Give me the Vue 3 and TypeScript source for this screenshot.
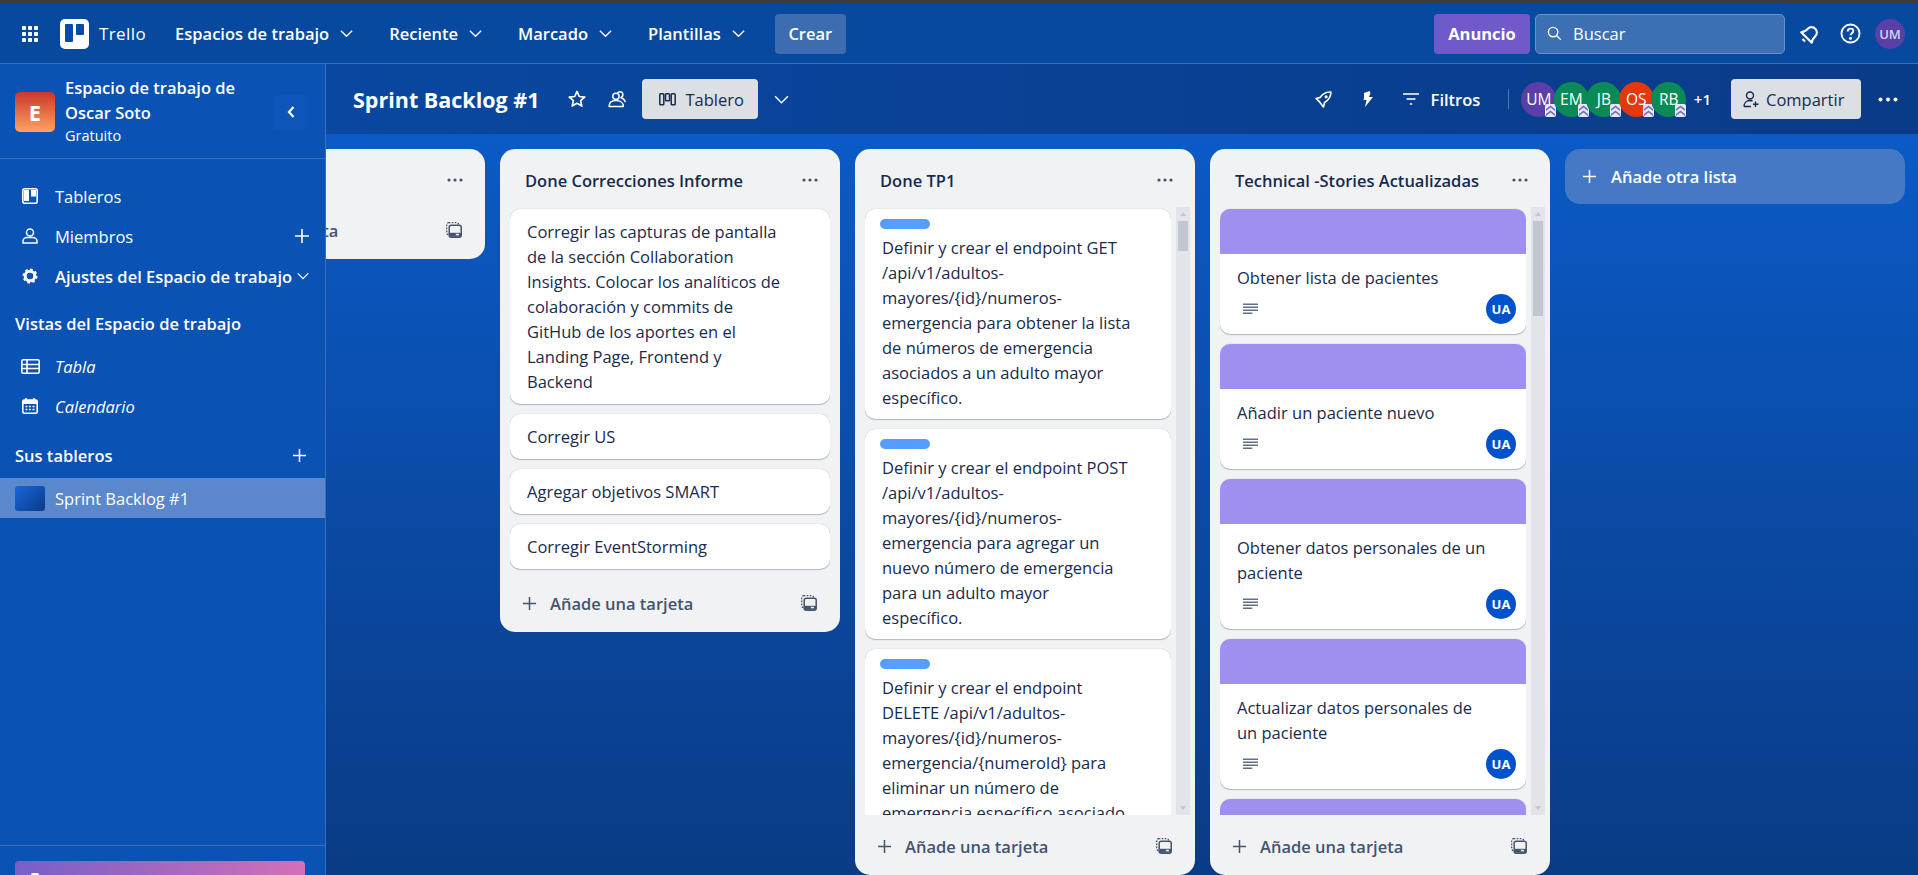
<script setup lang="ts">
type Card = {
  text: string;
  label?: boolean;
  cover?: boolean;
};

type BoardList = {
  id: string;
  title: string;
  clipped?: boolean;
  scroll?: boolean;
  thumb?: number;
  cards: Card[];
};

const navMenus = ["Espacios de trabajo", "Reciente", "Marcado", "Plantillas"];

const members = [
  { name: "UM", color: "#5a3fa8" },
  { name: "EM", color: "#0a8a56" },
  { name: "JB", color: "#0a8a56" },
  { name: "OS", color: "#e2380d" },
  { name: "RB", color: "#0a8a56" },
];

const lists: BoardList[] = [
  { id: "first", title: "", clipped: true, cards: [] },
  {
    id: "informe",
    title: "Done Correcciones Informe",
    cards: [
      {
        text: "Corregir las capturas de pantalla\nde la sección Collaboration\nInsights. Colocar los analíticos de\ncolaboración y commits de\nGitHub de los aportes en el\nLanding Page, Frontend y\nBackend",
      },
      { text: "Corregir US" },
      { text: "Agregar objetivos SMART" },
      { text: "Corregir EventStorming" },
    ],
  },
  {
    id: "tp1",
    title: "Done TP1",
    scroll: true,
    thumb: 30,
    cards: [
      {
        label: true,
        text: "Definir y crear el endpoint GET\n/api/v1/adultos-\nmayores/{id}/numeros-\nemergencia para obtener la lista\nde números de emergencia\nasociados a un adulto mayor\nespecífico.",
      },
      {
        label: true,
        text: "Definir y crear el endpoint POST\n/api/v1/adultos-\nmayores/{id}/numeros-\nemergencia para agregar un\nnuevo número de emergencia\npara un adulto mayor\nespecífico.",
      },
      {
        label: true,
        text: "Definir y crear el endpoint\nDELETE /api/v1/adultos-\nmayores/{id}/numeros-\nemergencia/{numeroId} para\neliminar un número de\nemergencia específico asociado\na un adulto mayor.",
      },
    ],
  },
  {
    id: "technical",
    title: "Technical -Stories Actualizadas",
    scroll: true,
    thumb: 95,
    cards: [
      { cover: true, text: "Obtener lista de pacientes" },
      { cover: true, text: "Añadir un paciente nuevo" },
      { cover: true, text: "Obtener datos personales de un\npaciente" },
      { cover: true, text: "Actualizar datos personales de\nun paciente" },
      { cover: true, text: "Eliminar un paciente" },
    ],
  },
];
</script>

<template>
  <svg class="sprite" aria-hidden="true">
    <symbol id="i-chevron" viewBox="0 0 16 16"><path d="M2 5l6 6 6-6" fill="none" stroke="currentColor" stroke-width="1.4" /></symbol>
    <symbol id="i-plus" viewBox="0 0 16 16"><path d="M8 1v14M1 8h14" fill="none" stroke="currentColor" stroke-width="1.6" /></symbol>
    <symbol id="i-dots" viewBox="0 0 16 4"><circle cx="2" cy="2" r="1.6" fill="currentColor" /><circle cx="8" cy="2" r="1.6" fill="currentColor" /><circle cx="14" cy="2" r="1.6" fill="currentColor" /></symbol>
    <symbol id="i-template" viewBox="0 0 16 16">
      <rect x=".7" y=".7" width="12" height="12" rx="2" fill="none" stroke="currentColor" stroke-width="1.3" stroke-dasharray="1.6 1.4" />
      <rect x="3.2" y="3.2" width="12" height="12" rx="2" fill="#f1f2f4" stroke="currentColor" stroke-width="1.5" />
      <rect x="3.500" y="10.800" width="11.500" height="4" fill="currentColor" />
      <rect x="9.800" y="11.800" width="3.200" height="1.500" fill="#f1f2f4" />
    </symbol>
    <symbol id="i-desc" viewBox="0 0 16 12"><path d="M0 1h16M0 4.200h16M0 7.400h16M0 10.600h10" fill="none" stroke="currentColor" stroke-width="1.500" /></symbol>
    <symbol id="i-chev-up" viewBox="0 0 11 13"><path d="M1 5l4.500-3.500L10 5v2L5.500 3.500 1 7zM1 10l4.500-3.500L10 10v2L5.500 8.500 1 12z" fill="#6a6fc9" /></symbol>
  </svg>

  <div class="app">
    <div class="top-strip"></div>

    <header class="nav">
      <svg class="grid-icon" viewBox="0 0 16 16" fill="currentColor">
        <rect x="0" y="0" width="4" height="4" rx=".8" /><rect x="6" y="0" width="4" height="4" rx=".8" /><rect x="12" y="0" width="4" height="4" rx=".8" />
        <rect x="0" y="6" width="4" height="4" rx=".8" /><rect x="6" y="6" width="4" height="4" rx=".8" /><rect x="12" y="6" width="4" height="4" rx=".8" />
        <rect x="0" y="12" width="4" height="4" rx=".8" /><rect x="6" y="12" width="4" height="4" rx=".8" /><rect x="12" y="12" width="4" height="4" rx=".8" />
      </svg>
      <div class="brand">
        <svg class="logo" viewBox="0 0 29 30">
          <rect width="29" height="30" rx="5" fill="#fff" />
          <rect x="5" y="5" width="8" height="18" rx="1" fill="#0a4ba6" />
          <rect x="16" y="5" width="8" height="11" rx="1" fill="#0a4ba6" />
        </svg>
        <span class="brand-name">Trello</span>
      </div>
      <nav class="menus">
        <button v-for="item in navMenus" :key="item" type="button" class="menu">
          {{ item }}
          <svg class="menu-chevron"><use href="#i-chevron" /></svg>
        </button>
      </nav>
      <button type="button" class="create">Crear</button>

      <div class="nav-right">
        <button type="button" class="promo">Anuncio</button>
        <div class="search">
          <svg class="search-icon" viewBox="0 0 16 16"><circle cx="6.500" cy="6.500" r="5" fill="none" stroke="currentColor" stroke-width="1.500" /><path d="M10.200 10.200l4.600 4.600" stroke="currentColor" stroke-width="1.500" /></svg>
          <span>Buscar</span>
        </div>
        <svg class="bell" viewBox="0 0 20 20" fill="none" stroke="currentColor" stroke-width="1.900" stroke-linejoin="round">
          <g transform="rotate(45 10 10)">
            <path d="M3.200 14.500c1.800-1.800 2-3.500 2-6.500a4.800 4.800 0 0 1 9.600 0c0 3 .2 4.700 2 6.500z" />
            <path d="M8.300 18h3.400" />
          </g>
        </svg>
        <svg class="help" viewBox="0 0 20 20" fill="none" stroke="currentColor" stroke-width="1.800">
          <circle cx="10" cy="10" r="8.600" />
          <path d="M7.400 8c0-1.600 1.200-2.600 2.700-2.600s2.600 1 2.600 2.300c0 2-2.700 2-2.700 4" />
          <circle cx="10" cy="14.500" r=".6" fill="currentColor" />
        </svg>
        <span class="avatar-me">UM</span>
      </div>
    </header>

    <div class="workspace">
      <aside class="sidebar">
        <div class="side-head">
          <div class="ws-badge">E</div>
          <div class="ws-info">
            <div class="ws-name">Espacio de trabajo de<br />Oscar Soto</div>
            <div class="ws-plan">Gratuito</div>
          </div>
          <button type="button" class="collapse" aria-label="Contraer">
            <svg viewBox="0 0 10 14"><path d="M7.500 2L3 7l4.500 5" fill="none" stroke="currentColor" stroke-width="2.200" /></svg>
          </button>
        </div>

        <div class="side-body">
          <div class="side-item">
            <svg class="side-icon" viewBox="0 0 16 16"><rect x=".8" y=".8" width="14.400" height="14.400" rx="2" fill="none" stroke="currentColor" stroke-width="1.600" /><rect x="2" y="2" width="5" height="11" fill="currentColor" /><rect x="9" y="2" width="5" height="6.500" fill="currentColor" /></svg>
            <span>Tableros</span>
          </div>
          <div class="side-item">
            <svg class="side-icon" viewBox="0 0 16 16" fill="none" stroke="currentColor" stroke-width="1.500"><circle cx="8" cy="4.500" r="3.500" /><path d="M1 15v-2c0-2 2-3.500 4-3.500h6c2 0 4 1.500 4 3.500v2z" stroke-linejoin="round" /></svg>
            <span>Miembros</span>
            <svg class="side-plus"><use href="#i-plus" /></svg>
          </div>
          <div class="side-item strong">
            <svg class="side-icon" viewBox="0 0 16 16" fill="none" stroke="currentColor"><circle cx="8" cy="8" r="4.800" stroke-width="3" /><circle cx="8" cy="8" r="6.600" stroke-width="1.800" stroke-dasharray="2.600 2.580" /></svg>
            <span>Ajustes del Espacio de trabajo</span>
            <svg class="side-chevron"><use href="#i-chevron" /></svg>
          </div>

          <div class="side-title views">Vistas del Espacio de trabajo</div>
          <div class="side-item view">
            <svg class="side-icon wide" viewBox="0 0 19 15"><rect x=".8" y=".8" width="17.400" height="13.400" rx="1.500" fill="none" stroke="currentColor" stroke-width="1.600" /><path d="M1 5.500h17M1 9.500h17M6 1v13" stroke="currentColor" stroke-width="1.600" /></svg>
            <em>Tabla</em>
          </div>
          <div class="side-item view">
            <svg class="side-icon" viewBox="0 0 16 16"><path d="M4 0v3M12 0v3" stroke="currentColor" stroke-width="1.600" /><rect x=".8" y="2" width="14.400" height="13.200" rx="1.500" fill="none" stroke="currentColor" stroke-width="1.600" /><rect x="1" y="2" width="14" height="4" fill="currentColor" /><path d="M3.500 8.500h9M3.500 11.500h9" stroke="currentColor" stroke-width="1.600" stroke-dasharray="2 1.500" /></svg>
            <em>Calendario</em>
          </div>

          <div class="side-title boards">
            Sus tableros
            <svg class="boards-plus"><use href="#i-plus" /></svg>
          </div>
          <div class="side-board">
            <span class="board-thumb"></span>
            <span>Sprint Backlog #1</span>
          </div>
        </div>

        <div class="side-foot">
          <div class="upgrade"><span class="upgrade-mark"></span></div>
        </div>
      </aside>

      <main class="main">
        <div class="board-bar">
          <h1 class="board-title">Sprint Backlog #1</h1>
          <svg class="bar-icon star" viewBox="0 0 16 16"><path d="M8 1.300l2 4.500 4.900.5-3.700 3.200 1.100 4.800L8 11.800l-4.300 2.500 1.100-4.800L1.100 6.300 6 5.800z" fill="none" stroke="currentColor" stroke-width="1.500" stroke-linejoin="round" /></svg>
          <svg class="bar-icon team" viewBox="0 0 17 17" fill="none" stroke="currentColor" stroke-width="1.400" stroke-linejoin="round">
            <circle cx="7.500" cy="6" r="3" />
            <path d="M1 15.500c0-3.500 2.500-5.500 6.500-5.500s7 2 7 5.500z" />
            <path d="M9 2.800c.8-1.500 4.500-1.800 5 .8.300 1.700-.5 3-1.800 3.700 2 .6 3.800 2 4 4.200" />
          </svg>
          <button type="button" class="view-btn">
            <svg class="view-icon" viewBox="0 0 17 13" fill="none" stroke="currentColor" stroke-width="1.500"><rect x=".8" y=".8" width="4" height="11" rx=".8" /><rect x="6.500" y=".8" width="4" height="7" rx=".8" /><rect x="12.200" y=".8" width="4" height="11" rx=".8" /></svg>
            Tablero
          </button>
          <svg class="bar-chevron"><use href="#i-chevron" /></svg>

          <div class="bar-right">
            <svg class="bar-icon rocket" viewBox="0 0 16 16" fill="none" stroke="currentColor" stroke-width="1.500" stroke-linejoin="round">
              <path d="M15 1c-4.500 0-8 1.500-10 5L1 7l3.500 3.500L8 15l1-4.200c3.500-2 6-5.300 6-9.800z" />
              <circle cx="10.500" cy="5.500" r=".7" fill="currentColor" />
            </svg>
            <svg class="bar-icon bolt" viewBox="0 0 10 16"><path d="M6.500 0L1 2v6l-1 1h3.500L2 16l8-10H6l1.500-4z" fill="currentColor" /></svg>
            <svg class="bar-icon funnel" viewBox="0 0 16 12"><path d="M0 1h16M3.500 6h9M6.800 11h2.400" stroke="currentColor" stroke-width="1.700" /></svg>
            <span class="filters">Filtros</span>
            <span class="bar-divider"></span>
            <div class="members">
              <span v-for="m in members" :key="m.name" class="member" :style="{ background: m.color }">
                {{ m.name }}
                <svg class="member-badge"><use href="#i-chev-up" /></svg>
              </span>
            </div>
            <span class="more-members">+1</span>
            <button type="button" class="share">
              <svg class="share-icon" viewBox="0 0 17 17" fill="none" stroke="currentColor" stroke-width="1.400"><circle cx="7" cy="4.500" r="3.500" /><path d="M1 15.500c0-3.500 2.500-6 6-6 1 0 1.800.2 2.500.5M1 15.500h7M12.500 10.500v5.500M10 13.200h5.500" /></svg>
              Compartir
            </button>
            <svg class="bar-dots"><use href="#i-dots" /></svg>
          </div>
        </div>

        <div class="canvas">
          <section
            v-for="list in lists"
            :key="list.id"
            class="list"
            :class="{ clipped: list.clipped, scrolled: list.scroll }"
          >
            <div class="list-head">
              <span class="list-title">{{ list.title }}</span>
              <svg class="list-dots"><use href="#i-dots" /></svg>
            </div>
            <div v-if="list.cards.length" class="list-body">
              <div class="cards">
                <article v-for="(card, i) in list.cards" :key="i" class="card">
                  <div v-if="card.cover" class="card-cover"></div>
                  <div v-if="card.label" class="card-label"></div>
                  <div class="card-text" :class="{ covered: card.cover }">{{ card.text }}</div>
                  <div v-if="card.cover" class="card-meta">
                    <svg class="desc-icon"><use href="#i-desc" /></svg>
                    <span class="card-avatar">UA</span>
                  </div>
                </article>
              </div>
              <div v-if="list.scroll" class="track">
                <span class="arrow up"></span>
                <span class="thumb" :style="{ height: list.thumb + 'px' }"></span>
                <span class="arrow down"></span>
              </div>
            </div>
            <div class="list-foot">
              <svg class="foot-plus"><use href="#i-plus" /></svg>
              <span class="foot-text">Añade una tarjeta</span>
              <svg class="foot-template"><use href="#i-template" /></svg>
            </div>
          </section>

          <button type="button" class="add-list">
            <svg class="add-plus"><use href="#i-plus" /></svg>
            Añade otra lista
          </button>
        </div>
      </main>
    </div>
  </div>
</template>

<style scoped>
.sprite {
  display: none;
}

.app {
  display: flex;
  flex-direction: column;
  height: 875px;
  overflow: hidden;
  background: #0849a0;
  color: #fff;
  font-family: "Open Sans", "Noto Sans", sans-serif;
  font-size: 16.5px;
}

button {
  border: 0;
  font: inherit;
  color: inherit;
  background: none;
  padding: 0;
}

.top-strip {
  height: 4px;
  background: #3b3d40;
  flex: none;
}

/* top navigation */
.nav {
  display: flex;
  align-items: center;
  flex: none;
  height: 59px;
  padding: 0 13px 0 22px;
  background: #0849a0;
  border-bottom: 1px solid #3a6fb8;
  box-sizing: content-box;
}

.grid-icon {
  width: 16px;
  height: 16px;
}

.brand {
  display: flex;
  align-items: center;
  gap: 10px;
  margin-left: 22px;
}

.logo {
  width: 29px;
  height: 30px;
}

.brand-name {
  font-size: 17px;
  letter-spacing: 0.4px;
}

.menus {
  display: flex;
  gap: 35px;
  margin-left: 29px;
}

.menu {
  display: flex;
  align-items: center;
  gap: 10px;
  font-weight: 600;
}

.menu-chevron {
  width: 15px;
  height: 15px;
}

.create {
  margin-left: 29px;
  width: 71px;
  height: 40px;
  border-radius: 4px;
  background: #3d6db0;
  font-weight: 600;
}

.nav-right {
  display: flex;
  align-items: center;
  margin-left: auto;
}

.promo {
  width: 96px;
  height: 40px;
  border-radius: 4px;
  background: #7059c8;
  font-weight: 700;
}

.search {
  display: flex;
  align-items: center;
  gap: 11px;
  width: 250px;
  height: 40px;
  margin-left: 5px;
  padding-left: 11px;
  box-sizing: border-box;
  border: 1px solid #6b91c6;
  border-radius: 5px;
  background: #3d6fb3;
}

.search-icon {
  width: 15px;
  height: 15px;
}

.bell {
  width: 22px;
  height: 22px;
  margin-left: 14px;
}

.help {
  width: 21px;
  height: 21px;
  margin-left: 19px;
}

.avatar-me {
  display: flex;
  align-items: center;
  justify-content: center;
  width: 30px;
  height: 30px;
  margin-left: 14px;
  border-radius: 50%;
  background: #5a3fa8;
  font-size: 13px;
  font-weight: 600;
  color: #d9d3f2;
}

/* workspace */
.workspace {
  display: flex;
  flex: 1;
  min-height: 0;
}

.sidebar {
  display: flex;
  flex-direction: column;
  flex: none;
  width: 325px;
  background: #0a52b4;
  border-right: 1px solid #3a6fb8;
  position: relative;
  z-index: 1;
}

.side-head {
  display: flex;
  align-items: center;
  flex: none;
  height: 95px;
  padding: 0 17px 0 15px;
  border-bottom: 1px solid #3a6fb8;
  box-sizing: border-box;
}

.ws-badge {
  display: flex;
  align-items: center;
  justify-content: center;
  width: 40px;
  height: 40px;
  margin-top: 2px;
  border-radius: 5px;
  background: linear-gradient(#c9372c, #fea362);
  font-size: 22px;
  font-weight: 700;
}

.ws-info {
  flex: 1;
  margin-left: 10px;
  margin-top: -1px;
}

.ws-name {
  font-weight: 600;
  line-height: 25px;
}

.ws-plan {
  font-size: 14.5px;
  line-height: 22px;
}

.collapse {
  display: flex;
  align-items: center;
  justify-content: center;
  width: 35px;
  height: 35px;
  margin-top: 2px;
  border-radius: 4px;
  background: #0d55b8;
}

.collapse svg {
  width: 10px;
  height: 14px;
}

.side-body {
  flex: 1;
  padding-top: 17px;
}

.side-item {
  display: flex;
  align-items: center;
  height: 40px;
  padding: 0 15px 0 22px;
}

.side-item.strong {
  font-weight: 600;
}

.side-item span,
.side-item em {
  flex: 1;
  margin-left: 17px;
  white-space: nowrap;
}

.side-icon {
  width: 16px;
  height: 16px;
  flex: none;
}

.side-icon.wide {
  width: 19px;
  height: 15px;
  margin-left: -1px;
  margin-right: -2px;
}

.side-plus {
  width: 16px;
  height: 16px;
}

.side-chevron {
  width: 14px;
  height: 14px;
  margin-left: 2px;
}

.side-title {
  display: flex;
  align-items: center;
  height: 40px;
  padding: 0 18px 0 15px;
  font-weight: 600;
}

.views {
  margin-top: 7px;
  margin-bottom: 3px;
}

.boards {
  justify-content: space-between;
  margin-top: 9px;
  margin-bottom: 3px;
}

.boards-plus {
  width: 15px;
  height: 15px;
}

.side-board {
  display: flex;
  align-items: center;
  gap: 10px;
  height: 40px;
  padding-left: 15px;
  background: #5b87cc;
}

.board-thumb {
  width: 30px;
  height: 25px;
  border-radius: 3px;
  background: linear-gradient(135deg, #1766dc, #0a3c87);
}

.side-foot {
  flex: none;
  height: 30px;
  padding: 15px 20px 0 15px;
  border-top: 1px solid #3a6fb8;
  box-sizing: border-box;
  overflow: hidden;
}

.upgrade {
  height: 40px;
  padding: 12px 0 0 16px;
  border-radius: 4px;
  background: linear-gradient(90deg, #7560c8, #d36fb8);
  box-sizing: border-box;
}

.upgrade-mark {
  display: block;
  width: 8px;
  height: 16px;
  background: #fff;
  border-radius: 2px 2px 0 0;
}

/* board area */
.main {
  flex: 1;
  min-width: 0;
  display: flex;
  flex-direction: column;
  overflow: hidden;
  background: linear-gradient(#0b5dcd, #0a3b85);
}

.board-bar {
  display: flex;
  align-items: center;
  flex: none;
  height: 70px;
  padding: 0 20px 0 27px;
  background: linear-gradient(90deg, #0947a0, #0a3b88);
}

.board-title {
  margin: 0;
  font-size: 21.5px;
  font-weight: 700;
  white-space: nowrap;
}

.bar-icon {
  flex: none;
}

.star {
  width: 18px;
  height: 18px;
  margin-left: 29px;
}

.team {
  width: 18px;
  height: 18px;
  margin-left: 22px;
}

.view-btn {
  display: flex;
  align-items: center;
  gap: 9px;
  height: 40px;
  width: 116px;
  margin-left: 16px;
  padding-left: 17px;
  box-sizing: border-box;
  border-radius: 4px;
  background: #dcdfe4;
  color: #172b4d;
}

.view-icon {
  width: 17px;
  height: 13px;
}

.bar-chevron {
  width: 17px;
  height: 17px;
  margin-left: 15px;
}

.bar-right {
  display: flex;
  align-items: center;
  margin-left: auto;
}

.rocket {
  width: 17px;
  height: 17px;
}

.bolt {
  width: 10px;
  height: 16px;
  margin-left: 31px;
}

.funnel {
  width: 16px;
  height: 12px;
  margin-left: 30px;
}

.filters {
  margin-left: 12px;
  font-weight: 600;
}

.bar-divider {
  width: 1px;
  height: 20px;
  margin-left: 28px;
  background: #4a76b4;
}

.members {
  display: flex;
  margin-left: 12px;
}

.member {
  position: relative;
  display: flex;
  align-items: center;
  justify-content: center;
  width: 35px;
  height: 35px;
  margin-right: -2.5px;
  border-radius: 50%;
  font-size: 15.5px;
  font-weight: 500;
}

.member-badge {
  position: absolute;
  right: 0;
  bottom: 0;
  width: 11px;
  height: 13px;
  background: #e9e9f8;
  border-radius: 2px;
}

.more-members {
  margin-left: 10px;
  font-size: 15px;
  font-weight: 600;
}

.share {
  display: flex;
  align-items: center;
  gap: 6px;
  height: 40px;
  width: 130px;
  margin-left: 20px;
  padding-left: 12px;
  box-sizing: border-box;
  border-radius: 4px;
  background: #dcdfe4;
  color: #172b4d;
}

.share-icon {
  width: 17px;
  height: 17px;
}

.bar-dots {
  width: 20px;
  height: 5px;
  margin-left: 17px;
}

/* lists */
.canvas {
  display: flex;
  align-items: flex-start;
  flex: 1;
  min-height: 0;
  gap: 15px;
  padding-top: 15px;
}

.list {
  display: flex;
  flex-direction: column;
  flex: none;
  width: 340px;
  border-radius: 15px;
  background: #f1f2f4;
  color: #172b4d;
}

.list.clipped {
  margin-left: -181px;
}

.list.scrolled {
  height: 726px;
}

.list-head {
  display: flex;
  align-items: center;
  justify-content: space-between;
  flex: none;
  height: 60px;
  margin-bottom: -2px;
  padding: 2px 22px 0 25px;
  box-sizing: border-box;
}

.list-title {
  font-size: 16.5px;
  font-weight: 600;
  white-space: nowrap;
}

.list-dots {
  width: 16px;
  height: 4px;
  color: #44546f;
}

.list-body {
  display: flex;
  gap: 5px;
  flex: 1;
  min-height: 0;
  padding: 0 5px 0 10px;
}

.scrolled .list-body {
  margin-bottom: 2px;
}

.cards {
  display: flex;
  flex-direction: column;
  flex: 1;
  min-width: 0;
  gap: 10px;
  padding: 2px 0 5px;
  overflow: hidden;
}

.list:not(.scrolled) .cards {
  margin-right: 5px;
}

.card {
  flex: none;
  overflow: hidden;
  border-radius: 10px;
  background: #fff;
  box-shadow: 0 1px 1px #091e4240, 0 0 1px #091e424f;
}

.card-cover {
  height: 45px;
  background: #9f8fef;
}

.card-label {
  width: 50px;
  height: 10px;
  margin: 10px 0 0 15px;
  border-radius: 5px;
  background: #579dff;
}

.card-text {
  padding: 10px 17px;
  line-height: 25px;
  white-space: pre-line;
  font-size: 16.5px;
}

.card-label + .card-text {
  padding-top: 6px;
  padding-bottom: 9px;
}

.card-text.covered {
  padding-top: 11px;
  padding-bottom: 4px;
}

.card-meta {
  display: flex;
  align-items: center;
  justify-content: space-between;
  height: 30px;
  padding: 0 10px 10px 23px;
}

.desc-icon {
  width: 15px;
  height: 12px;
  color: #626f86;
}

.card-avatar {
  display: flex;
  align-items: center;
  justify-content: center;
  width: 30px;
  height: 30px;
  border-radius: 50%;
  background: #0052cc;
  color: #fff;
  font-size: 13px;
  font-weight: 700;
}

.track {
  position: relative;
  flex: none;
  display: flex;
  flex-direction: column;
  align-items: center;
  width: 14px;
  background: #e2e4e9;
}

.thumb {
  width: 10px;
  margin-top: 14px;
  background: #c1c7d0;
}

.arrow {
  position: absolute;
  left: 4px;
  border-left: 3px solid transparent;
  border-right: 3px solid transparent;
}

.arrow.up {
  top: 5px;
  border-bottom: 4px solid #c1c7d0;
}

.arrow.down {
  bottom: 5px;
  border-top: 4px solid #c1c7d0;
}

.list-foot {
  display: flex;
  align-items: center;
  flex: none;
  height: 58px;
  padding: 0 23px 0 22px;
  box-sizing: border-box;
  color: #44546f;
}

.clipped .list-foot {
  margin-top: -6px;
}

.foot-plus {
  width: 15px;
  height: 15px;
}

.foot-text {
  flex: 1;
  margin-left: 13px;
  font-weight: 600;
}

.foot-template {
  width: 16px;
  height: 16px;
}

.add-list {
  display: flex;
  align-items: center;
  gap: 14px;
  flex: none;
  width: 340px;
  height: 55px;
  padding-left: 17px;
  border-radius: 15px;
  background: #4579c6;
  font-weight: 600;
}

.add-plus {
  width: 15px;
  height: 15px;
}
</style>
